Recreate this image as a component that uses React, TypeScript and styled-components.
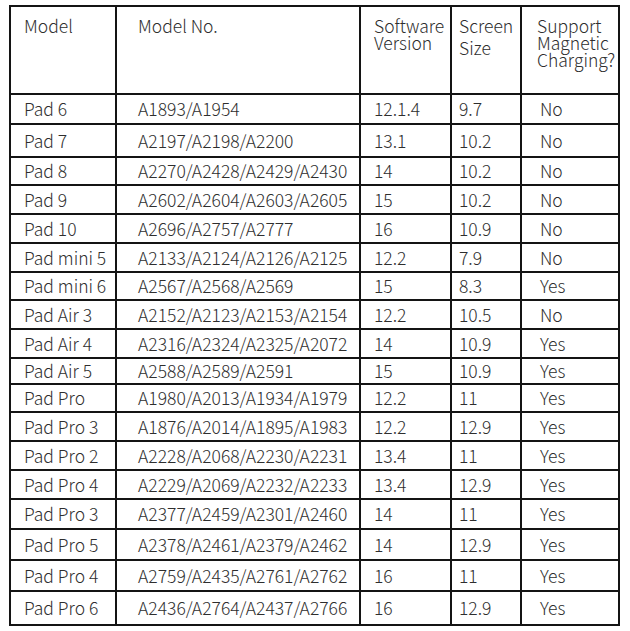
import React from "react";
import styled, { createGlobalStyle } from "styled-components";

interface Row {
  model: string;
  modelNo: string;
  version: string;
  size: string;
  magnetic: string;
  height: number;
}

const rows: Row[] = [
  { model: "Pad 6", modelNo: "A1893/A1954", version: "12.1.4", size: "9.7", magnetic: "No", height: 30 },
  { model: "Pad 7", modelNo: "A2197/A2198/A2200", version: "13.1", size: "10.2", magnetic: "No", height: 33 },
  { model: "Pad 8", modelNo: "A2270/A2428/A2429/A2430", version: "14", size: "10.2", magnetic: "No", height: 28 },
  { model: "Pad 9", modelNo: "A2602/A2604/A2603/A2605", version: "15", size: "10.2", magnetic: "No", height: 29 },
  { model: "Pad 10", modelNo: "A2696/A2757/A2777", version: "16", size: "10.9", magnetic: "No", height: 29 },
  { model: "Pad mini 5", modelNo: "A2133/A2124/A2126/A2125", version: "12.2", size: "7.9", magnetic: "No", height: 29 },
  { model: "Pad mini 6", modelNo: "A2567/A2568/A2569", version: "15", size: "8.3", magnetic: "Yes", height: 28 },
  { model: "Pad Air 3", modelNo: "A2152/A2123/A2153/A2154", version: "12.2", size: "10.5", magnetic: "No", height: 29 },
  { model: "Pad Air 4", modelNo: "A2316/A2324/A2325/A2072", version: "14", size: "10.9", magnetic: "Yes", height: 29 },
  { model: "Pad Air 5", modelNo: "A2588/A2589/A2591", version: "15", size: "10.9", magnetic: "Yes", height: 26 },
  { model: "Pad Pro", modelNo: "A1980/A2013/A1934/A1979", version: "12.2", size: "11", magnetic: "Yes", height: 28 },
  { model: "Pad Pro 3", modelNo: "A1876/A2014/A1895/A1983", version: "12.2", size: "12.9", magnetic: "Yes", height: 29 },
  { model: "Pad Pro 2", modelNo: "A2228/A2068/A2230/A2231", version: "13.4", size: "11", magnetic: "Yes", height: 29 },
  { model: "Pad Pro 4", modelNo: "A2229/A2069/A2232/A2233", version: "13.4", size: "12.9", magnetic: "Yes", height: 29 },
  { model: "Pad Pro 3", modelNo: "A2377/A2459/A2301/A2460", version: "14", size: "11", magnetic: "Yes", height: 30 },
  { model: "Pad Pro 5", modelNo: "A2378/A2461/A2379/A2462", version: "14", size: "12.9", magnetic: "Yes", height: 31 },
  { model: "Pad Pro 4", modelNo: "A2759/A2435/A2761/A2762", version: "16", size: "11", magnetic: "Yes", height: 31 },
  { model: "Pad Pro 6", modelNo: "A2436/A2764/A2437/A2766", version: "16", size: "12.9", magnetic: "Yes", height: 34 },
];

const columns = [
  { width: 106, pad: 13 },
  { width: 244, pad: 21 },
  { width: 91, pad: 13 },
  { width: 70, pad: 7 },
  { width: 98, pad: 18 },
];

const App = () => {
  return (
    <>
      <GlobalStyle />
      <Table>
        <colgroup>
          {columns.map((c, i) => (
            <Col key={i} $width={c.width} />
          ))}
        </colgroup>
        <thead>
          <HeaderRow>
            <HeadCell $pad={columns[0].pad}>Model</HeadCell>
            <HeadCell $pad={columns[1].pad}>Model No.</HeadCell>
            <HeadCell $pad={columns[2].pad} $lineHeight={17} $top={10}>
              Software Version
            </HeadCell>
            <HeadCell $pad={columns[3].pad} $lineHeight={22}>
              Screen Size
            </HeadCell>
            <HeadCell $pad={15} $lineHeight={17} $top={10}>
              Support Magnetic Charging?
            </HeadCell>
          </HeaderRow>
        </thead>
        <tbody>
          {rows.map((r, i) => (
            <BodyRow key={i} $height={r.height}>
              <Cell $pad={columns[0].pad}>{r.model}</Cell>
              <Cell $pad={columns[1].pad}>{r.modelNo}</Cell>
              <Cell $pad={columns[2].pad}>{r.version}</Cell>
              <Cell $pad={columns[3].pad}>{r.size}</Cell>
              <Cell $pad={columns[4].pad}>{r.magnetic}</Cell>
            </BodyRow>
          ))}
        </tbody>
      </Table>
    </>
  );
};

export default App;

const GlobalStyle = createGlobalStyle`
  body {
    margin: 0;
    background: #ffffff;
    font-family: "Noto Sans CJK SC", "Noto Sans", sans-serif;
    font-weight: 300;
    color: #2e2e2e;
  }
`;

const Table = styled.table`
  margin: 5px 0 0 9px;
  width: 611px;
  table-layout: fixed;
  border-collapse: collapse;
  border: 2px solid #141414;
  font-size: 17.5px;
`;

const Col = styled.col<{ $width: number }>`
  width: ${({ $width }) => $width}px;
`;

const HeaderRow = styled.tr`
  height: 88px;
`;

const HeadCell = styled.th<{ $pad: number; $lineHeight?: number; $top?: number }>`
  border: 2px solid #141414;
  padding: ${({ $top }) => $top ?? 8}px 0 0 ${({ $pad }) => $pad}px;
  vertical-align: top;
  text-align: left;
  font-weight: 300;
  line-height: ${({ $lineHeight }) => $lineHeight ?? 22}px;
  overflow: visible;
`;

const BodyRow = styled.tr<{ $height: number }>`
  height: ${({ $height }) => $height}px;
`;

const Cell = styled.td<{ $pad: number }>`
  border: 2px solid #141414;
  padding: 0 0 0 ${({ $pad }) => $pad}px;
  vertical-align: middle;
  line-height: 20px;
  white-space: nowrap;
`;
